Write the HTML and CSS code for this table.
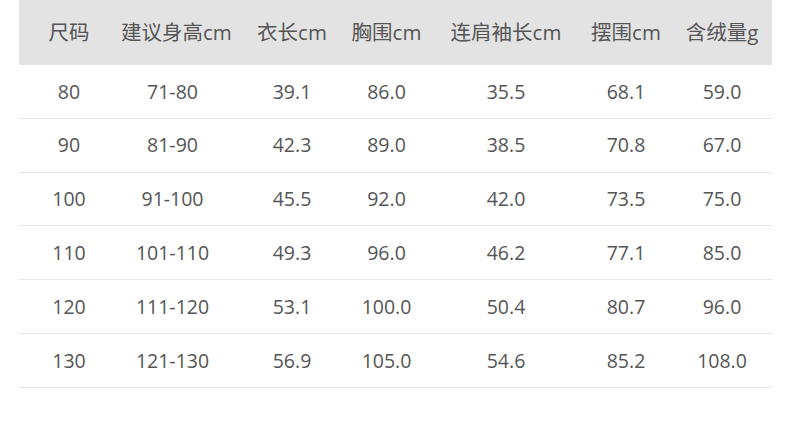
FILE: index.html
```html
<!DOCTYPE html>
<html lang="zh-CN">
<head>
<meta charset="utf-8">
<title>尺码表</title>
<link rel="stylesheet" href="styles.css">
</head>
<body>
<div class="size-table">
  <div class="row head">
    <div class="c c1">尺码</div><div class="c c2">建议身高cm</div><div class="c c3">衣长cm</div><div class="c c4">胸围cm</div><div class="c c5">连肩袖长cm</div><div class="c c6">摆围cm</div><div class="c c7">含绒量g</div>
  </div>
  <div class="row">
    <div class="c c1">80</div><div class="c c2">71-80</div><div class="c c3">39.1</div><div class="c c4">86.0</div><div class="c c5">35.5</div><div class="c c6">68.1</div><div class="c c7">59.0</div>
  </div>
  <div class="row">
    <div class="c c1">90</div><div class="c c2">81-90</div><div class="c c3">42.3</div><div class="c c4">89.0</div><div class="c c5">38.5</div><div class="c c6">70.8</div><div class="c c7">67.0</div>
  </div>
  <div class="row">
    <div class="c c1">100</div><div class="c c2">91-100</div><div class="c c3">45.5</div><div class="c c4">92.0</div><div class="c c5">42.0</div><div class="c c6">73.5</div><div class="c c7">75.0</div>
  </div>
  <div class="row">
    <div class="c c1">110</div><div class="c c2">101-110</div><div class="c c3">49.3</div><div class="c c4">96.0</div><div class="c c5">46.2</div><div class="c c6">77.1</div><div class="c c7">85.0</div>
  </div>
  <div class="row">
    <div class="c c1">120</div><div class="c c2">111-120</div><div class="c c3">53.1</div><div class="c c4">100.0</div><div class="c c5">50.4</div><div class="c c6">80.7</div><div class="c c7">96.0</div>
  </div>
  <div class="row">
    <div class="c c1">130</div><div class="c c2">121-130</div><div class="c c3">56.9</div><div class="c c4">105.0</div><div class="c c5">54.6</div><div class="c c6">85.2</div><div class="c c7">108.0</div>
  </div>
</div>
</body>
</html>
```
FILE: styles.css
```css
html, body {
  margin: 0;
  padding: 0;
  background: #ffffff;
}
body {
  font-family: "Open Sans", "Noto Sans CJK SC", sans-serif;
  color: #555555;
}
.size-table {
  margin-left: 19px;
  width: 753px;
}
.row {
  display: grid;
  grid-template-columns: 102px 111px 107px 107px 120px 108px 98px;
  height: 53.8px;
  box-sizing: border-box;
  border-bottom: 1px solid #e6e6e6;
  align-items: center;
  font-size: 19.5px;
}
.row.head {
  height: 65px;
  background: #e3e3e3;
  border-bottom: none;
  font-size: 20.5px;
}
.c {
  text-align: center;
  white-space: nowrap;
  line-height: 1;
}
.c1 { padding-right: 2px; }
.c2 { padding-right: 8px; }
.c3 { padding-left: 13px; }
.c4 { padding-right: 12px; }
.c6 { padding-left: 12px; }
.c7 { padding-right: 2px; }
```
